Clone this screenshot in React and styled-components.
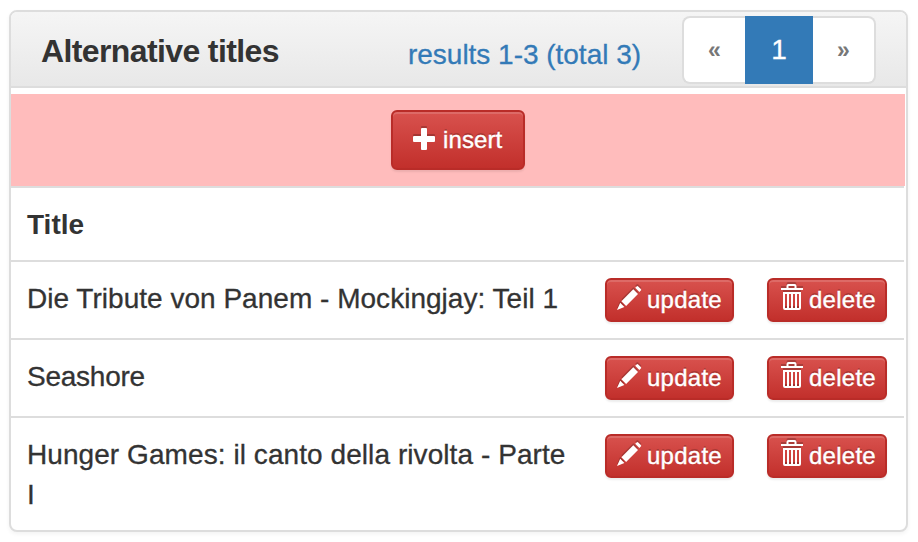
import React from 'react';
import styled, { createGlobalStyle } from 'styled-components';

const GlobalStyle = createGlobalStyle`
  * { box-sizing: border-box; }
  body {
    margin: 0;
    background: #fff;
    color: #333;
    font: 28px/40px "Liberation Sans", Arial, sans-serif;
  }
`;

const Page = styled.main`
  padding: 10px 10px 10px 9px;
`;

const Panel = styled.section`
  width: 899px;
  height: 522px;
  border: 2px solid #ddd;
  border-radius: 8px;
  background: #fff;
  box-shadow: 0 2px 4px rgba(0, 0, 0, 0.05);
`;

const Header = styled.header`
  display: flex;
  align-items: flex-start;
  height: 76px;
  padding: 4px 30px 0 30px;
  border-bottom: 2px solid #ddd;
  border-radius: 6px 6px 0 0;
  background: linear-gradient(#f5f5f5, #e8e8e8);
`;

const Heading = styled.h3`
  width: 367px;
  margin: 17px 0 0;
  font-size: 32px;
  line-height: 36px;
  font-weight: 700;
  letter-spacing: -0.62px;
  white-space: nowrap;
`;

const Results = styled.span`
  width: 274px;
  margin-top: 19px;
  color: #337ab7;
  letter-spacing: -0.02px;
  white-space: nowrap;
  -webkit-text-stroke: 0.3px currentColor;
`;

const Pagination = styled.nav`
  display: flex;
  height: 68px;
`;

const PageItem = styled.span`
  display: flex;
  align-items: center;
  justify-content: center;
  width: ${(p) => (p.$active ? 68 : 63)}px;
  border: 2px solid ${(p) => (p.$active ? '#337ab7' : '#ddd')};
  background: ${(p) => (p.$active ? '#337ab7' : '#fff')};
  color: ${(p) => (p.$active ? '#fff' : '#777')};
  font-size: ${(p) => (p.$active ? 28 : 23)}px;
  font-weight: ${(p) => (p.$active ? 400 : 700)};
  -webkit-text-stroke: ${(p) => (p.$active ? 0.3 : 0)}px currentColor;
  &:first-child { border-right: 0; border-radius: 8px 0 0 8px; }
  &:last-child { border-left: 0; border-radius: 0 8px 8px 0; }
`;

const InsertBar = styled.div`
  display: flex;
  justify-content: center;
  width: 894px;
  height: 92px;
  margin-top: 6px;
  padding-top: 16px;
  background: #ffbcbc;
`;

const Row = styled.div`
  display: grid;
  grid-template-columns: 578px 162px 120px;
  align-items: start;
  width: 893px;
  height: ${(p) => p.$height}px;
  padding: 16px 0 0 16px;
  border-top: 2px solid #ddd;
`;

const Label = styled.span`
  width: 548px;
  padding-top: 1px;
  font-weight: ${(p) => (p.$bold ? 700 : 400)};
  letter-spacing: ${(p) => p.$spacing || 0}px;
  -webkit-text-stroke: ${(p) => (p.$bold ? 0 : 0.3)}px currentColor;
`;

const Button = styled.button`
  display: flex;
  align-items: center;
  gap: 6px;
  width: ${(p) => p.$width}px;
  height: ${(p) => (p.$large ? 60 : 44)}px;
  padding: 0 0 0 ${(p) => (p.$large ? 20 : 10)}px;
  border: 2px solid #b92c28;
  border-radius: 6px;
  background: linear-gradient(#d9534f, #c12e2a) border-box;
  box-shadow: inset 0 2px 0 rgba(255, 255, 255, 0.15), 0 2px 2px rgba(0, 0, 0, 0.075);
  color: #fff;
  font: 24px/36px "Liberation Sans", Arial, sans-serif;
  letter-spacing: ${(p) => (p.$large ? 0.1 : 0.25)}px;
  text-shadow: 0 -2px 0 rgba(0, 0, 0, 0.2);
  white-space: nowrap;
  -webkit-text-stroke: 0.4px currentColor;
`;

const Icon = styled.svg`
  flex: none;
  width: 24px;
  height: 28px;
  margin-top: -4px;
  overflow: visible;
  fill: #fff;
  filter: drop-shadow(0 -2px 0 rgba(0, 0, 0, 0.2));
`;

const PlusIcon = () => (
  <Icon viewBox="0 0 24 28">
    <path d="M9 4h4q1 0 1 1v7h7q1 0 1 1v4q0 1-1 1h-7v7q0 1-1 1H9q-1 0-1-1v-7H1q-1 0-1-1v-4q0-1 1-1h7V5q0-1 1-1z" />
  </Icon>
);

const PencilIcon = () => (
  <Icon viewBox="0 0 24 28">
    <path d="M19.6 2.4q.8-.8 1.6 0l2.6 2.6q.8.8 0 1.6L22.4 8 18.2 3.8zM16.3 5.3l4.7 4.7L9.1 21.9l-4.7-4.7zM3.2 18.8l4.2 4.2L0 26z" />
  </Icon>
);

const TrashIcon = () => (
  <Icon viewBox="-2 0 24 28">
    <path d="M5.5 4V2q0-2 2-2h6q2 0 2 2v2H22v2H0V4zM7.5 4h6V2h-6z" fillRule="evenodd" />
    <path d="M2 8h18v16q0 2-2 2H4q-2 0-2-2zM4 10v14h2V10zM8 10v14h2V10zM12 10v14h2V10zM16 10v14h2V10z" fillRule="evenodd" />
  </Icon>
);

const rows = [
  { title: 'Die Tribute von Panem - Mockingjay: Teil 1', height: 78, spacing: 0.02 },
  { title: 'Seashore', height: 78, spacing: -0.25 },
  { title: 'Hunger Games: il canto della rivolta - Parte I', height: 112, spacing: 0.07 },
];

export default function App() {
  return (
    <Page>
      <GlobalStyle />
      <Panel>
        <Header>
          <Heading>Alternative titles</Heading>
          <Results>results 1-3 (total 3)</Results>
          <Pagination>
            <PageItem>«</PageItem>
            <PageItem $active>1</PageItem>
            <PageItem>»</PageItem>
          </Pagination>
        </Header>
        <InsertBar>
          <Button $large $width={134}><PlusIcon />insert</Button>
        </InsertBar>
        <Row $height={74}><Label $bold>Title</Label></Row>
        {rows.map((row) => (
          <Row key={row.title} $height={row.height}>
            <Label $spacing={row.spacing}>{row.title}</Label>
            <Button $width={129}><PencilIcon />update</Button>
            <Button $width={120}><TrashIcon />delete</Button>
          </Row>
        ))}
      </Panel>
    </Page>
  );
}
